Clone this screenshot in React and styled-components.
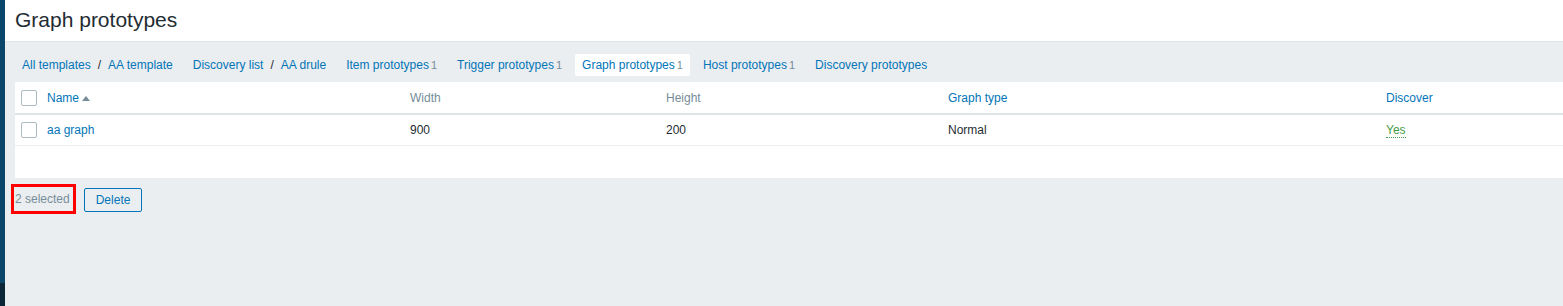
import React from 'react';
import styled, { createGlobalStyle } from 'styled-components';

const GlobalStyle = createGlobalStyle`
  html, body {
    margin: 0;
    padding: 0;
    height: 100%;
    background: #ebeef0;
    font-family: "Liberation Sans", Arial, sans-serif;
    font-size: 12px;
    color: #1f2c33;
  }
  #root {
    height: 100%;
  }
`;

const Page = styled.div`
  display: flex;
  height: 306px;
  overflow: hidden;
`;

const Sidebar = styled.div`
  width: 5px;
  flex: none;
  display: flex;
  flex-direction: column;
`;

const SidebarTop = styled.div`
  flex: 1;
  background: #0a466a;
`;

const SidebarBottom = styled.div`
  height: 23px;
  background: #0b2737;
`;

const Main = styled.div`
  flex: 1;
  display: flex;
  flex-direction: column;
  min-width: 0;
`;

const Header = styled.header`
  height: 42px;
  flex: none;
  box-sizing: border-box;
  background: #fff;
  border-bottom: 1px solid #dfe4e7;
  display: flex;
  align-items: center;
  padding: 0 10px 2px;
`;

const Title = styled.h1`
  margin: 0;
  font-size: 21px;
  font-weight: normal;
  color: #1f2c33;
`;

const Content = styled.div`
  flex: 1;
  background: #ebeef0;
  padding: 0 0 0 10px;
`;

const Nav = styled.nav`
  display: flex;
  align-items: center;
  gap: 6px;
  padding: 12px 0 6px;
`;

const NavItem = styled.div`
  display: flex;
  align-items: center;
  height: 22px;
  padding: 0 7px;
  box-sizing: border-box;
  background: ${p => (p.$selected ? '#fff' : 'transparent')};
  border-radius: 2px;
`;

const NavLink = styled.a`
  color: #0275b8;
  text-decoration: none;
  cursor: pointer;
`;

const Sep = styled.span`
  color: #1f2c33;
  margin: 0 7px;
`;

const Count = styled.sup`
  color: #768d99;
  font-size: 11px;
  vertical-align: baseline;
  margin-left: 2px;
`;

const Table = styled.table`
  width: 100%;
  table-layout: fixed;
  border-collapse: collapse;
  background: #fff;
`;

const Th = styled.th`
  height: 31px;
  padding: 0 0 0 6px;
  text-align: left;
  font-weight: normal;
  color: ${p => (p.$link ? '#0275b8' : '#768d99')};
  border-bottom: 2px solid #dfe4e7;
  vertical-align: middle;
`;

const Td = styled.td`
  height: 30px;
  padding: 0 0 0 6px;
  border-bottom: 1px solid #ebeef0;
  vertical-align: middle;
  color: #1f2c33;
`;

const FillerCell = styled.td`
  height: 32px;
  padding: 0;
`;

const Checkbox = styled.span`
  display: block;
  width: 16px;
  height: 16px;
  box-sizing: border-box;
  border: 1px solid #acbbc2;
  border-radius: 2px;
  background: #fff;
`;

const SortArrow = styled.span`
  display: inline-block;
  width: 0;
  height: 0;
  margin-left: 3px;
  border-left: 4px solid transparent;
  border-right: 4px solid transparent;
  border-bottom: 5px solid #768d99;
  vertical-align: 1px;
`;

const Yes = styled.span`
  color: #429e47;
  border-bottom: 1px dotted #429e47;
`;

const Footer = styled.div`
  display: flex;
  align-items: center;
  gap: 8px;
  margin: 6px 0 0 -4px;
`;

const SelectedCount = styled.span`
  display: flex;
  align-items: center;
  height: 30px;
  box-sizing: border-box;
  padding: 0 3px 0 1px;
  border: 3px solid #f00;
  color: #768d99;
`;

const Button = styled.button`
  height: 24px;
  margin-top: 1px;
  padding: 0 11px;
  background: transparent;
  border: 1px solid #0275b8;
  border-radius: 2px;
  color: #0275b8;
  font-family: inherit;
  font-size: 12px;
  cursor: pointer;
`;

const navItems = [
  { label: 'Item prototypes', count: 1 },
  { label: 'Trigger prototypes', count: 1 },
  { label: 'Graph prototypes', count: 1, selected: true },
  { label: 'Host prototypes', count: 1 },
  { label: 'Discovery prototypes' },
];

export default function App() {
  return (
    <>
      <GlobalStyle />
      <Page>
        <Sidebar>
          <SidebarTop />
          <SidebarBottom />
        </Sidebar>
        <Main>
          <Header>
            <Title>Graph prototypes</Title>
          </Header>
          <Content>
            <Nav>
              <NavItem>
                <NavLink>All templates</NavLink>
                <Sep>/</Sep>
                <NavLink>AA template</NavLink>
              </NavItem>
              <NavItem>
                <NavLink>Discovery list</NavLink>
                <Sep>/</Sep>
                <NavLink>AA drule</NavLink>
              </NavItem>
              {navItems.map(item => (
                <NavItem key={item.label} $selected={item.selected}>
                  <NavLink>{item.label}</NavLink>
                  {item.count && <Count>{item.count}</Count>}
                </NavItem>
              ))}
            </Nav>
            <Table>
              <colgroup>
                <col style={{ width: 26 }} />
                <col style={{ width: 363 }} />
                <col style={{ width: 256 }} />
                <col style={{ width: 282 }} />
                <col style={{ width: 438 }} />
                <col />
              </colgroup>
              <thead>
                <tr>
                  <Th><Checkbox /></Th>
                  <Th $link>Name<SortArrow /></Th>
                  <Th>Width</Th>
                  <Th>Height</Th>
                  <Th $link>Graph type</Th>
                  <Th $link>Discover</Th>
                </tr>
              </thead>
              <tbody>
                <tr>
                  <Td><Checkbox /></Td>
                  <Td><NavLink>aa graph</NavLink></Td>
                  <Td>900</Td>
                  <Td>200</Td>
                  <Td>Normal</Td>
                  <Td><Yes>Yes</Yes></Td>
                </tr>
                <tr>
                  <FillerCell colSpan={6} />
                </tr>
              </tbody>
            </Table>
            <Footer>
              <SelectedCount>2 selected</SelectedCount>
              <Button>Delete</Button>
            </Footer>
          </Content>
        </Main>
      </Page>
    </>
  );
}
